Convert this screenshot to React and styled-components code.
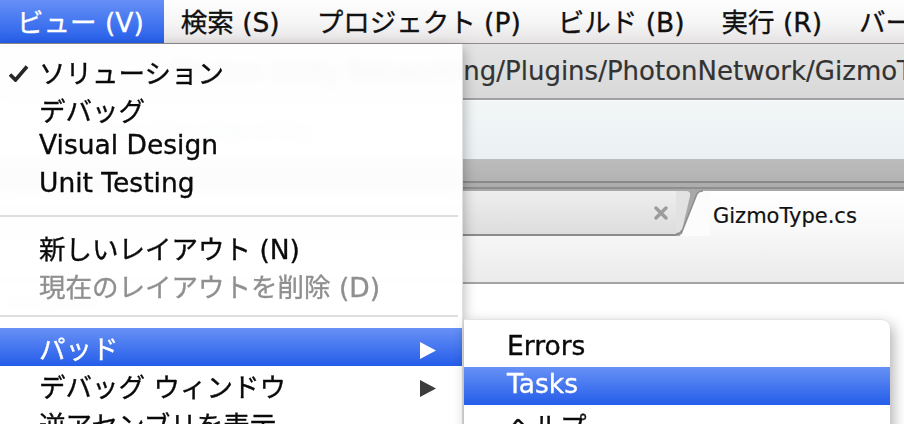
import React from 'react';
import styled, { createGlobalStyle } from 'styled-components';

const Global = createGlobalStyle`
  html, body { margin: 0; padding: 0; background: #fff; overflow: hidden; }
  body {
    width: 904px; height: 424px;
    font-family: "DejaVu Sans", "Noto Sans CJK JP", sans-serif;
  }
`;

const Screen = styled.div`
  position: relative;
  width: 904px;
  height: 424px;
  overflow: hidden;
  background: #fff;
`;

/* ---------- top menu bar ---------- */
const MenuBar = styled.div`
  display: flex;
  height: 43px;
  border-bottom: 1px solid #8e8e8e;
  background: linear-gradient(#fefefe, #f5f5f5 55%, #e6e2e3);
  font-size: 26.5px;
  -webkit-text-stroke: 0.35px currentColor;
  white-space: nowrap;
  overflow: hidden;
`;

const BarItem = styled.div`
  display: flex;
  align-items: center;
  flex: none;
  padding: 0 20px 3px 17px;
  color: ${p => (p.$active ? '#fff' : '#111')};
  background: ${p => (p.$active ? 'linear-gradient(#6690f6, #255ee9)' : 'transparent')};
`;

/* ---------- window behind the menus ---------- */
const Window = styled.div`
  display: flex;
  flex-direction: column;
`;

const PathBar = styled.div`
  height: 54px;
  display: flex;
  align-items: center;
  padding-left: 172px;
  background: linear-gradient(#e4e4e4, #d8d8d8);
  border-bottom: 2px solid #a0a0a0;
  font-size: 26px;
  color: #333;
  -webkit-text-stroke: 0.2px currentColor;
  white-space: nowrap;
`;

const ToolRow = styled.div`
  height: 58px;
  display: flex;
  align-items: center;
  gap: 14px;
  padding-left: 54px;
  background: linear-gradient(#f2f6f7, #ebf0f2);
  border-top: 1px solid #f9fbfc;
  font-size: 22px;
  color: #8a8a8a;
`;

const ToolIcon = styled.div`
  width: 16px;
  height: 16px;
  border-radius: 50%;
  border: 2px solid #999;
`;

const SplitBand = styled.div`
  height: 22px;
  background: linear-gradient(#bcbcbc, #b3b3b3);
`;

const SplitLines = styled.div`
  height: 4px;
  background: #adadad;
  border-top: 2px solid #8a8a8a;
  border-bottom: 2px solid #8e8e8e;
`;

const TabBar = styled.div`
  display: flex;
  height: 47px;
  background: #a8a8a8;
`;

const InactiveTab = styled.div`
  flex: 0 0 676px;
  display: flex;
  align-items: center;
  justify-content: flex-end;
  padding-right: 8px;
  margin-top: 2px;
  box-sizing: border-box;
  background: linear-gradient(#eeeeee, #dddddd);
  border-bottom: 2px solid #8c8c8c;
`;

const TabJoin = styled.svg`
  flex: none;
  display: block;
`;

const ActiveTab = styled.div`
  flex: 1;
  display: flex;
  align-items: center;
  padding: 4px 0 0 3px;
  margin-top: 2px;
  background: linear-gradient(#ffffff, #f7f7f7);
  font-size: 21px;
  color: #111;
  -webkit-text-stroke: 0.2px currentColor;
  white-space: nowrap;
`;

const ContentHeader = styled.div`
  height: 46px;
  background: linear-gradient(#f6f6f6, #ebebeb);
  border-bottom: 2px solid #a4a4a4;
`;

const PadTitle = styled.div`
  padding: 6px 0 0 6px;
  font-size: 20px;
  font-weight: bold;
  color: #999;
`;

/* ---------- menus ---------- */
const Menu = styled.div`
  position: absolute;
  top: 44px;
  left: 0;
  width: 463px;
  height: 420px;
  padding-top: 8px;
  box-sizing: border-box;
  background: rgba(255, 255, 255, 0.96);
  backdrop-filter: blur(5px);
  border-right: 1px solid rgba(0, 0, 0, 0.12);
  box-shadow: 1px 4px 12px rgba(0, 0, 0, 0.28);
  font-size: 26.5px;
  -webkit-text-stroke: 0.35px currentColor;
`;

const SubMenu = styled.div`
  position: absolute;
  top: 319px;
  left: 464px;
  width: 426px;
  height: 140px;
  padding-top: 9px;
  box-sizing: border-box;
  background: #fff;
  border-top: 1px solid #e4e4e4;
  border-radius: 0 9px 0 0;
  box-shadow: 3px 5px 14px rgba(0, 0, 0, 0.32);
  font-size: 26.5px;
  -webkit-text-stroke: 0.35px currentColor;
`;

const Item = styled.div`
  display: grid;
  grid-template-columns: ${p => p.$indent}px 1fr auto;
  align-items: center;
  height: 38px;
  box-sizing: border-box;
  padding: 0 26px 6px 0;
  white-space: nowrap;
  color: ${p => (p.$selected ? '#fff' : p.$disabled ? '#8f8f8f' : '#0a0a0a')};
  background: ${p => (p.$selected ? 'linear-gradient(#6891f6, #245de9)' : 'transparent')};
`;

const CheckCell = styled.div`
  display: flex;
  align-items: center;
  padding: 3px 0 0 8px;
`;

const ArrowCell = styled.span`
  display: flex;
  align-items: center;
  padding-top: 6px;
`;

const Separator = styled.div`
  height: 24px;
  display: flex;
  align-items: center;
  padding-right: 4px;
  &::after {
    content: '';
    flex: 1;
    height: 2px;
    background: #dedede;
  }
`;

const Check = () => (
  <svg width="21" height="17" viewBox="0 0 21 17">
    <path d="M2 9.5 L7.5 15 L19 1.5" fill="none" stroke="#262626" strokeWidth="3.6" strokeLinejoin="miter" />
  </svg>
);

const Arrow = ({ color }) => (
  <svg width="16" height="17" viewBox="0 0 16 17">
    <polygon points="0,0 16,8.5 0,17" fill={color} />
  </svg>
);

const CloseX = () => (
  <svg width="14" height="14" viewBox="0 0 14 14">
    <path d="M2 2 L12 12 M12 2 L2 12" stroke="#9c9c9c" strokeWidth="3.4" strokeLinecap="round" />
  </svg>
);

const MenuRow = ({ label, check, arrow, selected, disabled, indent = 39 }) => (
  <Item $selected={selected} $disabled={disabled} $indent={indent}>
    <CheckCell>{check && <Check />}</CheckCell>
    <span>{label}</span>
    <ArrowCell>{arrow && <Arrow color={selected ? '#fff' : '#3c3c3c'} />}</ArrowCell>
  </Item>
);

const barItems = ['ビュー (V)', '検索 (S)', 'プロジェクト (P)', 'ビルド (B)', '実行 (R)', 'バージョン コントロール (C)'];

export default function App() {
  return (
    <Screen>
      <Global />
      <MenuBar>
        {barItems.map((t, i) => (
          <BarItem key={t} $active={i === 0}>{t}</BarItem>
        ))}
      </MenuBar>

      <Window>
        <PathBar>Photon Unity Networking/Plugins/PhotonNetwork/GizmoType.cs</PathBar>
        <ToolRow>
          <ToolIcon />
          <span>Mono-Develop-Unity</span>
        </ToolRow>
        <SplitBand />
        <SplitLines />
        <TabBar>
          <InactiveTab>
            <CloseX />
          </InactiveTab>
          <TabJoin width="34" height="47" viewBox="0 0 34 47">
            <path d="M0 2 L10 2 Q15 2 14 7 L6 41 Q5 45 0 45 Z" fill="#e2e2e2" />
            <path d="M0 45 Q5 45 6 41" fill="none" stroke="#8c8c8c" strokeWidth="2" />
            <path d="M34 2 L27 2 Q22 2 20.5 6 L4 47 L34 47 Z" fill="#fcfcfc" />
            <path d="M27 2 Q22 2 20.5 6 L5 45" fill="none" stroke="#8f8f8f" strokeWidth="1.6" />
          </TabJoin>
          <ActiveTab>GizmoType.cs</ActiveTab>
        </TabBar>
        <ContentHeader />
        <PadTitle>Solution</PadTitle>
      </Window>

      <Menu>
        <MenuRow label="ソリューション" check />
        <MenuRow label="デバッグ" />
        <MenuRow label="Visual Design" />
        <MenuRow label="Unit Testing" />
        <Separator />
        <MenuRow label="新しいレイアウト (N)" />
        <MenuRow label="現在のレイアウトを削除 (D)" disabled />
        <Separator />
        <MenuRow label="パッド" arrow selected />
        <MenuRow label="デバッグ ウィンドウ" arrow />
        <MenuRow label="逆アセンブリを表示" />
      </Menu>

      <SubMenu>
        <MenuRow label="Errors" indent={43} />
        <MenuRow label="Tasks" indent={43} selected />
        <MenuRow label="ヘルプ" indent={43} />
      </SubMenu>
    </Screen>
  );
}
